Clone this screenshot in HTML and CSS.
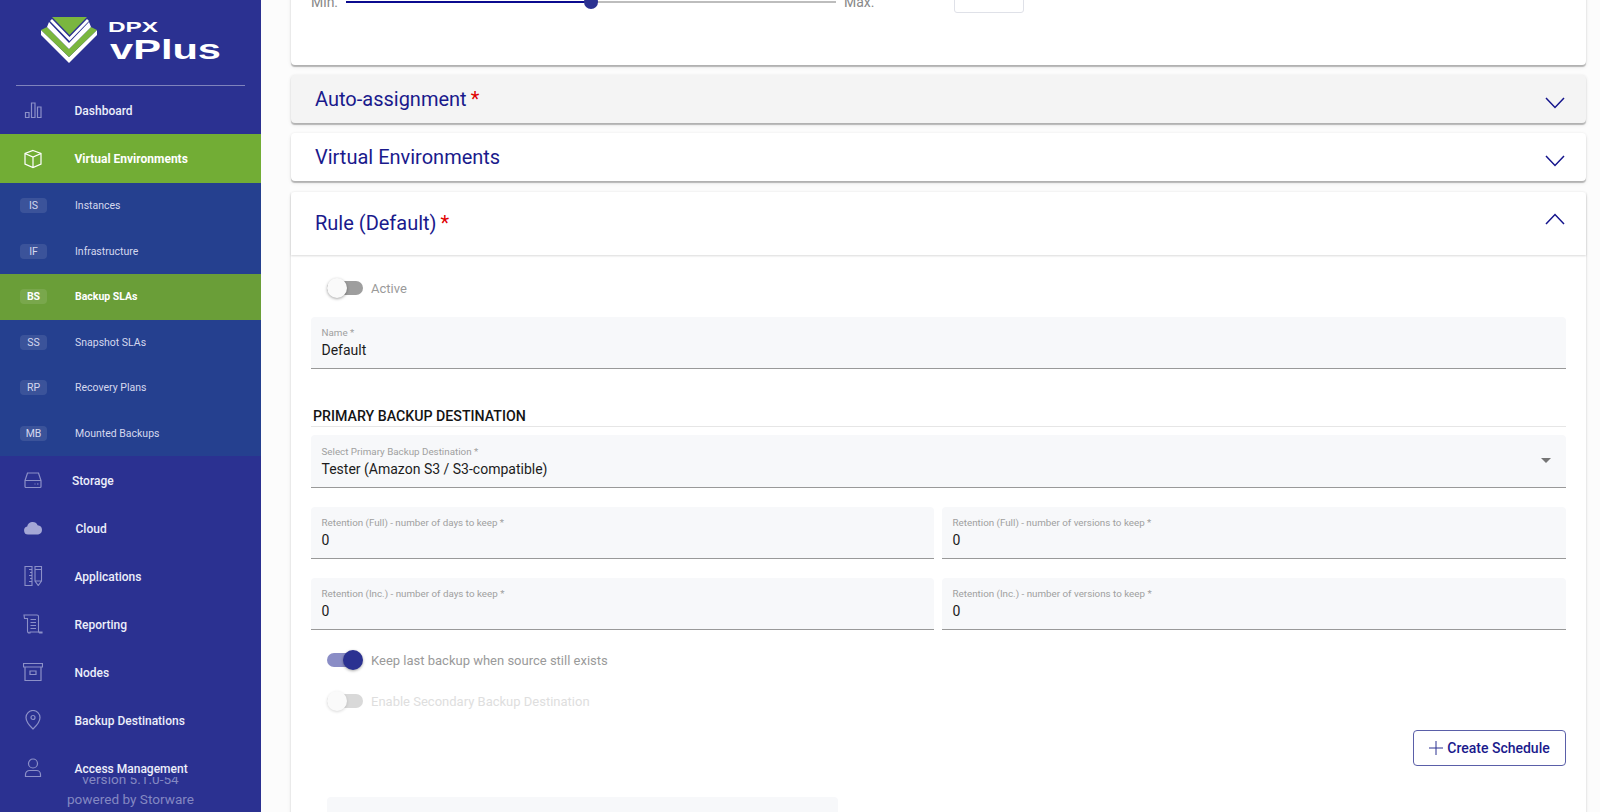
FILE: index.html
```html
<!DOCTYPE html>
<html lang="en">
<head>
<meta charset="utf-8">
<title>DPX vPlus</title>
<link rel="stylesheet" href="styles.css">
</head>
<body>
<div class="app">
  <aside class="sidebar">
    <div class="sidebar-top">
      <div class="logo">
        <svg class="logo-svg" viewBox="0 0 261 85" width="261" height="85">
          <polygon fill="#fff" points="41,30 69,57 97,30 97,35 69,63 41,35"/>
          <polygon fill="#7ab63f" points="47,27 69,49 91,27 97,30 69,57 41,30"/>
          <polygon fill="#fff" points="49,22 69,43 89,22 91,27 69,49 47,27"/>
          <polygon fill="#7ab63f" points="52,17 87,17 69.5,35"/>
          <polygon fill="#fff" points="50,21 52,19 69.5,37 87,19 89,21 69.5,41"/>
          <text class="logo-dpx" x="108" y="31.500" textLength="50" lengthAdjust="spacingAndGlyphs">DPX</text>
          <text class="logo-vplus" x="110" y="58.500" textLength="111" lengthAdjust="spacingAndGlyphs">vPlus</text>
        </svg>
      </div>
      <div class="sidebar-rule"></div>
      <nav class="nav">
        <a class="nav-item">
          <svg class="nav-icon" viewBox="0 0 20 20"><path d="M2.500 12.500h3.500v5h-3.500zM8.500 3h3.500v14.500h-3.500zM14.500 7h3.500v10.500h-3.500z"/></svg>
          <span class="nav-label">Dashboard</span>
        </a>
        <a class="nav-item nav-item-active">
          <svg class="nav-icon" viewBox="0 0 20 20"><path d="M10 1.500l8 3v10.500l-8 3.500-8-3.500V4.500zM2 4.500l8 3.500 8-3.500M10 8v10.500"/></svg>
          <span class="nav-label">Virtual Environments</span>
        </a>
        <div class="subnav">
          <a class="sub-item"><span class="badge">IS</span><span class="sub-label">Instances</span></a>
          <a class="sub-item"><span class="badge">IF</span><span class="sub-label">Infrastructure</span></a>
          <a class="sub-item sub-item-active"><span class="badge">BS</span><span class="sub-label">Backup SLAs</span></a>
          <a class="sub-item"><span class="badge">SS</span><span class="sub-label">Snapshot SLAs</span></a>
          <a class="sub-item"><span class="badge">RP</span><span class="sub-label">Recovery Plans</span></a>
          <a class="sub-item"><span class="badge">MB</span><span class="sub-label">Mounted Backups</span></a>
        </div>
        <a class="nav-item">
          <svg class="nav-icon" viewBox="0 0 20 20"><path d="M4.500 3h11l2.500 7.500v6a1 1 0 0 1-1 1H3a1 1 0 0 1-1-1v-6zM2 10.500h16M14 14h1.500M11.500 14h1"/></svg>
          <span class="nav-label nav-label-tight">Storage</span>
        </a>
        <a class="nav-item">
          <svg class="nav-icon nav-icon-solid" viewBox="0 0 20 20"><path d="M5 16.500a4 4 0 0 1-.8-7.900A5.500 5.500 0 0 1 14.600 7.200a4.700 4.700 0 0 1 .6 9.300z"/></svg>
          <span class="nav-label nav-label-wide">Cloud</span>
        </a>
        <a class="nav-item">
          <svg class="nav-icon nav-icon-tall" viewBox="0 0 20 20"><path d="M2 .5h7v19H2zM9 3.500H6M9 6.500H7M9 9.500H6M9 12.500H7M9 15.500H6M12 .5h6.500v14.500l-3.250 4.500L12 15zM12 3.500h6.500M12 15h6.500"/></svg>
          <span class="nav-label">Applications</span>
        </a>
        <a class="nav-item">
          <svg class="nav-icon nav-icon-tall" viewBox="0 0 20 20"><path d="M1 1h13a1.500 1.500 0 0 1 1.500 1.500V17a2 2 0 0 0 2 2h1.500v-1H7v1H6.500A2 2 0 0 1 4.500 17V4.500H1.500zM7.500 5.500h5.500M7.500 8.500h5.500M7.500 11.500h5.500M7.500 14.500h5.500"/></svg>
          <span class="nav-label">Reporting</span>
        </a>
        <a class="nav-item">
          <svg class="nav-icon" viewBox="0 0 20 20"><path d="M.5 1.500h19v3.500H.5zM2 5v13.500h16V5M7 9h6v3.500H7z"/></svg>
          <span class="nav-label">Nodes</span>
        </a>
        <a class="nav-item">
          <svg class="nav-icon" viewBox="0 0 20 20"><path d="M10 19s-7-6.500-7-11.500a7 7 0 0 1 14 0C17 12.500 10 19 10 19z"/><circle cx="10" cy="7.500" r="2"/></svg>
          <span class="nav-label">Backup Destinations</span>
        </a>
        <a class="nav-item">
          <svg class="nav-icon" viewBox="0 0 20 20"><circle cx="10" cy="5.500" r="4.500"/><path d="M2.500 18.500v-2a4 4 0 0 1 4-4h7a4 4 0 0 1 4 4v2z"/></svg>
          <span class="nav-label">Access Management</span>
        </a>
      </nav>
    </div>
    <footer class="sidebar-foot">
      <div class="foot-version">version 5.1.0-54</div>
      <div class="foot-powered">powered by Storware</div>
    </footer>
  </aside>

  <main class="main">
    <div class="scroll">
      <section class="card card-first">
        <div class="slider-row">
          <span class="slider-end">Min.</span>
          <div class="slider"><div class="slider-fill"></div><div class="slider-thumb"></div></div>
          <span class="slider-end slider-max">Max.</span>
          <div class="slider-box"></div>
        </div>
      </section>

      <section class="card panel-head panel-head-grey">
        <h2 class="panel-title">Auto-assignment<span class="req">*</span></h2>
        <svg class="chev chev-down" viewBox="0 0 20 12" width="20" height="12"><path d="M1 1l9 9.500L19 1"/></svg>
      </section>

      <section class="card panel-head panel-head-last">
        <h2 class="panel-title">Virtual Environments</h2>
        <svg class="chev chev-down" viewBox="0 0 20 12" width="20" height="12"><path d="M1 1l9 9.500L19 1"/></svg>
      </section>

      <section class="card rule">
        <div class="rule-head">
          <h2 class="panel-title">Rule (Default)<span class="req">*</span></h2>
          <svg class="chev chev-up" viewBox="0 0 20 12" width="20" height="12"><path d="M1 11L10 1.500 19 11"/></svg>
        </div>
        <div class="rule-body">
          <label class="toggle-row toggle-row-first">
            <span class="toggle"><span class="track"></span><span class="thumb"></span></span>
            <span class="toggle-label">Active</span>
          </label>

          <div class="field field-name">
            <div class="field-label">Name *</div>
            <div class="field-value">Default</div>
          </div>

          <h3 class="section-title">PRIMARY BACKUP DESTINATION</h3>

          <div class="field field-select">
            <div class="field-label">Select Primary Backup Destination *</div>
            <div class="field-value">Tester (Amazon S3 / S3-compatible)</div>
            <span class="select-arrow"></span>
          </div>

          <div class="field-grid field-grid-first">
            <div class="field">
              <div class="field-label">Retention (Full) - number of days to keep *</div>
              <div class="field-value">0</div>
            </div>
            <div class="field">
              <div class="field-label">Retention (Full) - number of versions to keep *</div>
              <div class="field-value">0</div>
            </div>
          </div>

          <div class="field-grid">
            <div class="field">
              <div class="field-label">Retention (Inc.) - number of days to keep *</div>
              <div class="field-value">0</div>
            </div>
            <div class="field">
              <div class="field-label">Retention (Inc.) - number of versions to keep *</div>
              <div class="field-value">0</div>
            </div>
          </div>

          <label class="toggle-row">
            <span class="toggle toggle-on"><span class="track"></span><span class="thumb"></span></span>
            <span class="toggle-label">Keep last backup when source still exists</span>
          </label>

          <label class="toggle-row toggle-row-disabled">
            <span class="toggle"><span class="track"></span><span class="thumb"></span></span>
            <span class="toggle-label">Enable Secondary Backup Destination</span>
          </label>

          <div class="actions">
            <button class="btn-outline" type="button">
              <svg class="btn-plus" viewBox="0 0 14 14" width="14" height="14"><path d="M7 0v14M0 7h14"/></svg>
              Create Schedule
            </button>
          </div>

          <div class="schedule-box"></div>
        </div>
      </section>
    </div>
  </main>
</div>
</body>
</html>
```
FILE: styles.css
```css
* { box-sizing: border-box; }

html, body {
  margin: 0;
  height: 812px;
  overflow: hidden;
  background: #fcfcfc;
  font-family: Roboto, "Liberation Sans", sans-serif;
}

.app {
  display: flex;
  width: 1600px;
  height: 812px;
  overflow: hidden;
}

/* Sidebar */
.sidebar {
  width: 261px;
  flex: none;
  height: 812px;
  display: flex;
  flex-direction: column;
  background: #2b3191;
  overflow: hidden;
}

.sidebar-top {
  height: 777px;
  flex: none;
  overflow: hidden;
  background: #2b3191;
  position: relative;
  z-index: 1;
}

.logo { height: 85px; }
.logo-svg { display: block; }

.logo-dpx {
  font-family: "Liberation Sans", sans-serif;
  font-size: 15px;
  font-weight: 700;
  fill: #fff;
}

.logo-vplus {
  font-family: "Liberation Sans", sans-serif;
  font-size: 28px;
  font-weight: 700;
  fill: #fff;
}

.sidebar-rule {
  height: 1px;
  margin: 0 16px;
  background: rgba(255, 255, 255, .4);
}

.nav-item {
  display: flex;
  align-items: center;
  height: 48px;
  padding-left: 23px;
  color: #eceefa;
  font-size: 12px;
  font-weight: 500;
}

.nav-item-active {
  height: 49px;
  background: #72ad35;
  color: #fff;
  font-weight: 700;
}

.nav-icon {
  width: 20px;
  height: 20px;
  flex: none;
  fill: none;
  stroke: #8c90c8;
  stroke-width: 1.2;
}

.nav-item-active .nav-icon { stroke: #fff; }

.nav-icon-solid {
  fill: #a4a7d6;
  stroke: none;
}

.nav-icon-tall { stroke-width: 1.1; }

.nav-label {
  margin-top: 2px;
  margin-left: 31.500px;
  white-space: nowrap;
}

.nav-item-active .nav-label { margin-top: 0; }
.nav-label-tight { margin-left: 29px; }
.nav-label-wide { margin-left: 32.500px; }

.subnav {
  height: 273px;
  background: #25408f;
  display: flex;
  flex-direction: column;
}

.sub-item {
  flex: 1;
  display: flex;
  align-items: center;
  padding-left: 20px;
  color: #d5d8ee;
  font-size: 10.500px;
}

.sub-item-active {
  background: #6a9e38;
  color: #fff;
  font-weight: 700;
}

.badge {
  width: 27px;
  height: 15px;
  border-radius: 4px;
  background: rgba(255, 255, 255, .1);
  font-size: 10.500px;
  line-height: 15px;
  text-align: center;
}

.sub-label { margin-left: 28px; }

.sidebar-foot {
  margin-top: -8px;
  text-align: center;
  color: #8488c2;
  font-size: 13.600px;
}

.foot-version { line-height: 20px; }
.foot-powered { line-height: 20px; }

/* Main column */
.main {
  flex: 1;
  min-width: 0;
  padding: 0 14px 0 30px;
  overflow: hidden;
}

.scroll { margin-top: -30px; }

.card {
  background: #fff;
  border-radius: 4px;
  margin-bottom: 10px;
  box-shadow: 0 2px 1px rgba(0, 0, 0, .24), 0 2px 4px rgba(0, 0, 0, .08), 0 0 3px rgba(0, 0, 0, .05);
}

.card-first {
  height: 95px;
  padding: 10px 20px 0;
}

.slider-row {
  display: flex;
  align-items: flex-end;
  height: 33px;
  color: #888;
  font-size: 14px;
}

.slider-end {
  line-height: 18px;
  width: 35px;
  margin-bottom: 2px;
}

.slider-max {
  width: 110px;
  margin-left: 8px;
}

.slider {
  position: relative;
  width: 490px;
  height: 2px;
  margin-bottom: 10px;
  background: #bdbdbd;
}

.slider-fill {
  height: 2px;
  width: 245px;
  background: #0b0b8f;
}

.slider-thumb {
  position: absolute;
  left: 238px;
  top: -6px;
  width: 14px;
  height: 14px;
  border-radius: 50%;
  background: #2b3191;
}

.slider-box {
  width: 70px;
  height: 33px;
  border: 1px solid #dfe1e8;
  border-radius: 3px;
  background: #fff;
}

.panel-head {
  height: 48px;
  display: flex;
  align-items: center;
  justify-content: space-between;
  padding: 0 21px 0 24px;
}

.panel-head-last { margin-bottom: 11px; }

.panel-head-grey { background: #f4f4f4; }

.panel-title {
  margin: 0 0 1px;
  color: #1a1a8c;
  font-size: 20px;
  font-weight: 400;
}

.req {
  margin-left: 4px;
  color: #e00000;
}

.chev {
  flex: none;
  fill: none;
  stroke: #14148c;
  stroke-width: 1.5;
}

.chev-down { margin-top: 8px; }
.chev-up { margin-bottom: 9px; }

/* Rule panel */
.rule { margin-bottom: 0; }

.rule-head {
  height: 63px;
  display: flex;
  align-items: center;
  justify-content: space-between;
  padding: 0 21px 0 24px;
  box-shadow: 0 1px 2px rgba(0, 0, 0, .15);
}

.rule-body { padding: 0 20px 20px; }

.toggle-row {
  display: flex;
  align-items: center;
  height: 20px;
  margin: 20px 0 0 16px;
}

.toggle-row-first { margin-top: 23px; }

.toggle-row-disabled { margin-top: 21px; }

.toggle {
  position: relative;
  width: 36px;
  height: 20px;
  flex: none;
}

.track {
  position: absolute;
  left: 0;
  top: 3px;
  width: 36px;
  height: 14px;
  border-radius: 7px;
  background: #9e9e9e;
}

.thumb {
  position: absolute;
  left: 0;
  top: 0;
  width: 20px;
  height: 20px;
  border-radius: 50%;
  background: #fafafa;
  box-shadow: 0 1px 3px rgba(0, 0, 0, .35);
}

.toggle-on .track { background: #8a8dc6; width: 34px; }
.toggle-on .thumb { left: 16px; background: #2b3191; }

.toggle-label {
  margin-left: 8px;
  color: #9a9a9a;
  font-size: 13px;
}

.toggle-row-disabled .track { background: #d9d9d9; }
.toggle-row-disabled .thumb { box-shadow: 0 1px 3px rgba(0, 0, 0, .15); }
.toggle-row-disabled .toggle-label { color: #dedede; }

.field {
  position: relative;
  height: 52px;
  padding: 10px 10.500px 0;
  background: #f7f8fa;
  border-bottom: 1px solid #999;
  border-radius: 4px 4px 0 0;
}

.field-name {
  margin-top: 19px;
}

.field-label {
  color: #a0a0a0;
  font-size: 9.800px;
  line-height: 12px;
  white-space: nowrap;
}

.field-value {
  margin-top: 2px;
  color: #1c1c1c;
  font-size: 14px;
  line-height: 18px;
  white-space: nowrap;
}

.section-title {
  margin: 39px 0 0;
  padding: 0 0 2px 2px;
  border-bottom: 1px solid #e6e6e6;
  color: #141414;
  font-size: 14.200px;
  font-weight: 500;
  line-height: 16px;
}

.field-select {
  height: 53px;
  margin-top: 8px;
  padding-top: 11px;
}

.select-arrow {
  position: absolute;
  right: 15px;
  top: 23px;
  width: 0;
  height: 0;
  border-left: 5px solid transparent;
  border-right: 5px solid transparent;
  border-top: 5px solid #757575;
}

.field-grid {
  display: grid;
  grid-template-columns: 623px 1fr;
  gap: 8px;
  margin-top: 19px;
}

.actions {
  display: flex;
  justify-content: flex-end;
  margin-top: 19px;
}

.btn-outline {
  display: flex;
  align-items: center;
  justify-content: center;
  gap: 4px;
  width: 153px;
  height: 36px;
  padding: 0;
  background: #fff;
  border: 1px solid #5a5fa8;
  border-radius: 4px;
  color: #1a1a8c;
  font-family: inherit;
  font-size: 14px;
  font-weight: 500;
}

.btn-plus {
  fill: none;
  stroke: #2b3191;
  stroke-width: 1;
}

.schedule-box {
  width: 511px;
  height: 80px;
  margin: 31px 0 0 16px;
  background: #f7f8fa;
  border-radius: 4px;
}
```
